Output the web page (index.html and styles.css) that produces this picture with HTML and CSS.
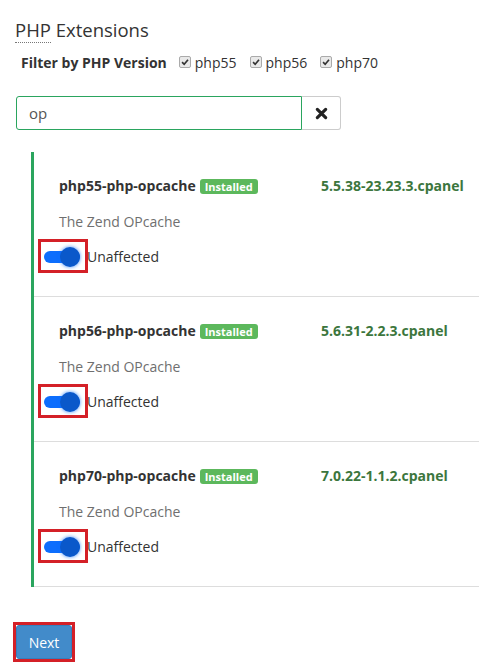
FILE: index.html
```html
<!DOCTYPE html>
<html>
<head>
<meta charset="utf-8">
<link rel="stylesheet" href="styles.css">
</head>
<body>
<div class="page">
  <h2 class="title"><abbr title="PHP: Hypertext Preprocessor">PHP</abbr> Extensions</h2>
  <div class="filter">
    <span class="filter-label">Filter by PHP Version</span>
    <label class="chk"><span class="box"><svg viewBox="0 0 12 12" width="12" height="12"><path d="M2.5 6.2 L5 8.7 L9.6 3.2" fill="none" stroke="#333" stroke-width="2"/></svg></span>php55</label>
    <label class="chk"><span class="box"><svg viewBox="0 0 12 12" width="12" height="12"><path d="M2.5 6.2 L5 8.7 L9.6 3.2" fill="none" stroke="#333" stroke-width="2"/></svg></span>php56</label>
    <label class="chk"><span class="box"><svg viewBox="0 0 12 12" width="12" height="12"><path d="M2.5 6.2 L5 8.7 L9.6 3.2" fill="none" stroke="#333" stroke-width="2"/></svg></span>php70</label>
  </div>
  <div class="search">
    <div class="search-input">op</div>
    <button class="search-clear" type="button"><svg viewBox="0 0 14 14" width="13" height="13"><path d="M2.5 2.5 L11.5 11.5 M11.5 2.5 L2.5 11.5" stroke="#222" stroke-width="3.4" stroke-linecap="round"/></svg></button>
  </div>
  <ul class="list">
    <li class="item">
      <div class="item-head">
        <div class="name">php55-php-opcache <span class="badge">Installed</span></div>
        <div class="version">5.5.38-23.23.3.cpanel</div>
      </div>
      <div class="desc">The Zend OPcache</div>
      <div class="toggle-row"><span class="toggle"><span class="track"></span><span class="knob"></span></span><span class="state">Unaffected</span></div>
    </li>
    <li class="item">
      <div class="item-head">
        <div class="name">php56-php-opcache <span class="badge">Installed</span></div>
        <div class="version">5.6.31-2.2.3.cpanel</div>
      </div>
      <div class="desc">The Zend OPcache</div>
      <div class="toggle-row"><span class="toggle"><span class="track"></span><span class="knob"></span></span><span class="state">Unaffected</span></div>
    </li>
    <li class="item">
      <div class="item-head">
        <div class="name">php70-php-opcache <span class="badge">Installed</span></div>
        <div class="version">7.0.22-1.1.2.cpanel</div>
      </div>
      <div class="desc">The Zend OPcache</div>
      <div class="toggle-row"><span class="toggle"><span class="track"></span><span class="knob"></span></span><span class="state">Unaffected</span></div>
    </li>
  </ul>
  <div class="actions"><span class="highlight"><button class="next" type="button">Next</button></span></div>
</div>
</body>
</html>
```
FILE: styles.css
```css
* { box-sizing: border-box; }
html, body { margin: 0; padding: 0; background: #fff; }
body {
  font-family: "Open Sans", "DejaVu Sans", sans-serif;
  font-size: 14px;
  color: #333;
}
.page { padding: 0 0 0 15px; }
.title {
  margin: 0;
  padding-top: 18px;
  font-size: 18.5px;
  font-weight: normal;
  line-height: 24px;
  color: #333;
}
.title abbr {
  text-decoration: none;
  border-bottom: 1px dotted #777;
}
.filter {
  display: flex;
  align-items: center;
  margin: 8px 0 0 6px;
  height: 24px;
}
.filter-label { font-weight: bold; margin-right: 12px; }
.chk {
  display: flex;
  align-items: center;
  margin-right: 13px;
  font-size: 14px;
}
.box {
  display: inline-flex;
  align-items: center;
  justify-content: center;
  width: 12px;
  height: 12px;
  border: 1px solid #aaa;
  border-radius: 2px;
  background: #e9e9e9;
  margin-right: 4px;
}
.box svg { width: 10px; height: 10px; }
.search {
  display: flex;
  margin: 22px 0 0 1px;
  width: 325px;
  height: 34px;
}
.search-input {
  flex: 1;
  border: 1px solid #2aa55e;
  border-radius: 3px 0 0 3px;
  padding: 0 12px;
  line-height: 32px;
  font-size: 15px;
  color: #555;
}
.search-clear {
  width: 39px;
  border: 1px solid #ccc;
  border-left: none;
  border-radius: 0 3px 3px 0;
  background: #fff;
  display: flex;
  align-items: center;
  justify-content: center;
  padding: 0;
}
.list {
  list-style: none;
  margin: 22px 0 0 16px;
  padding: 0;
  border-left: 3px solid #2aa55e;
  width: 448px;
}
.item {
  padding: 24px 0 26px 7px;
  border-bottom: 1px solid #ddd;
}
.item-head {
  display: flex;
  line-height: 20px;
}
.name {
  width: 280px;
  padding-left: 18px;
  font-weight: bold;
  color: #333;
  display: flex;
  align-items: center;
}
.badge {
  display: inline-block;
  margin-left: 4px;
  background: #5cb85c;
  color: #fff;
  font-size: 11px;
  font-weight: bold;
  line-height: 15px;
  padding: 0 5px;
  border-radius: 3px;
}
.version {
  font-weight: bold;
  color: #3c763d;
  font-size: 14px;
}
.desc {
  padding-left: 18px;
  margin-top: 16px;
  line-height: 20px;
  color: #6f6f6f;
}
.toggle-row {
  display: flex;
  align-items: center;
  margin-top: 10px;
  height: 28px;
}
.toggle {
  position: relative;
  display: block;
  width: 44px;
  height: 28px;
  outline: 3px solid #d42027;
  margin-right: 2px;
}
.track {
  position: absolute;
  left: 3px;
  top: 9px;
  width: 36px;
  height: 12px;
  border-radius: 6px;
  background: #0d6efd;
}
.knob {
  position: absolute;
  left: 19px;
  top: 5px;
  width: 20px;
  height: 20px;
  border-radius: 50%;
  background: #0a58ca;
  box-shadow: 0 0 3px 1px rgba(13, 110, 253, 0.45);
}
.state { color: #333; }
.actions { margin-top: 35px; padding-left: 0; display: flex; }
.highlight {
  display: block;
  border: 3px solid #d42027;
  margin-left: -2px;
}
.next {
  display: block;
  width: 56px;
  height: 34px;
  background: #428bca;
  border: 1px solid #357ebd;
  border-radius: 3px;
  color: #fff;
  font-family: "Open Sans", "DejaVu Sans", sans-serif;
  font-size: 14px;
  padding: 0;
}
```
